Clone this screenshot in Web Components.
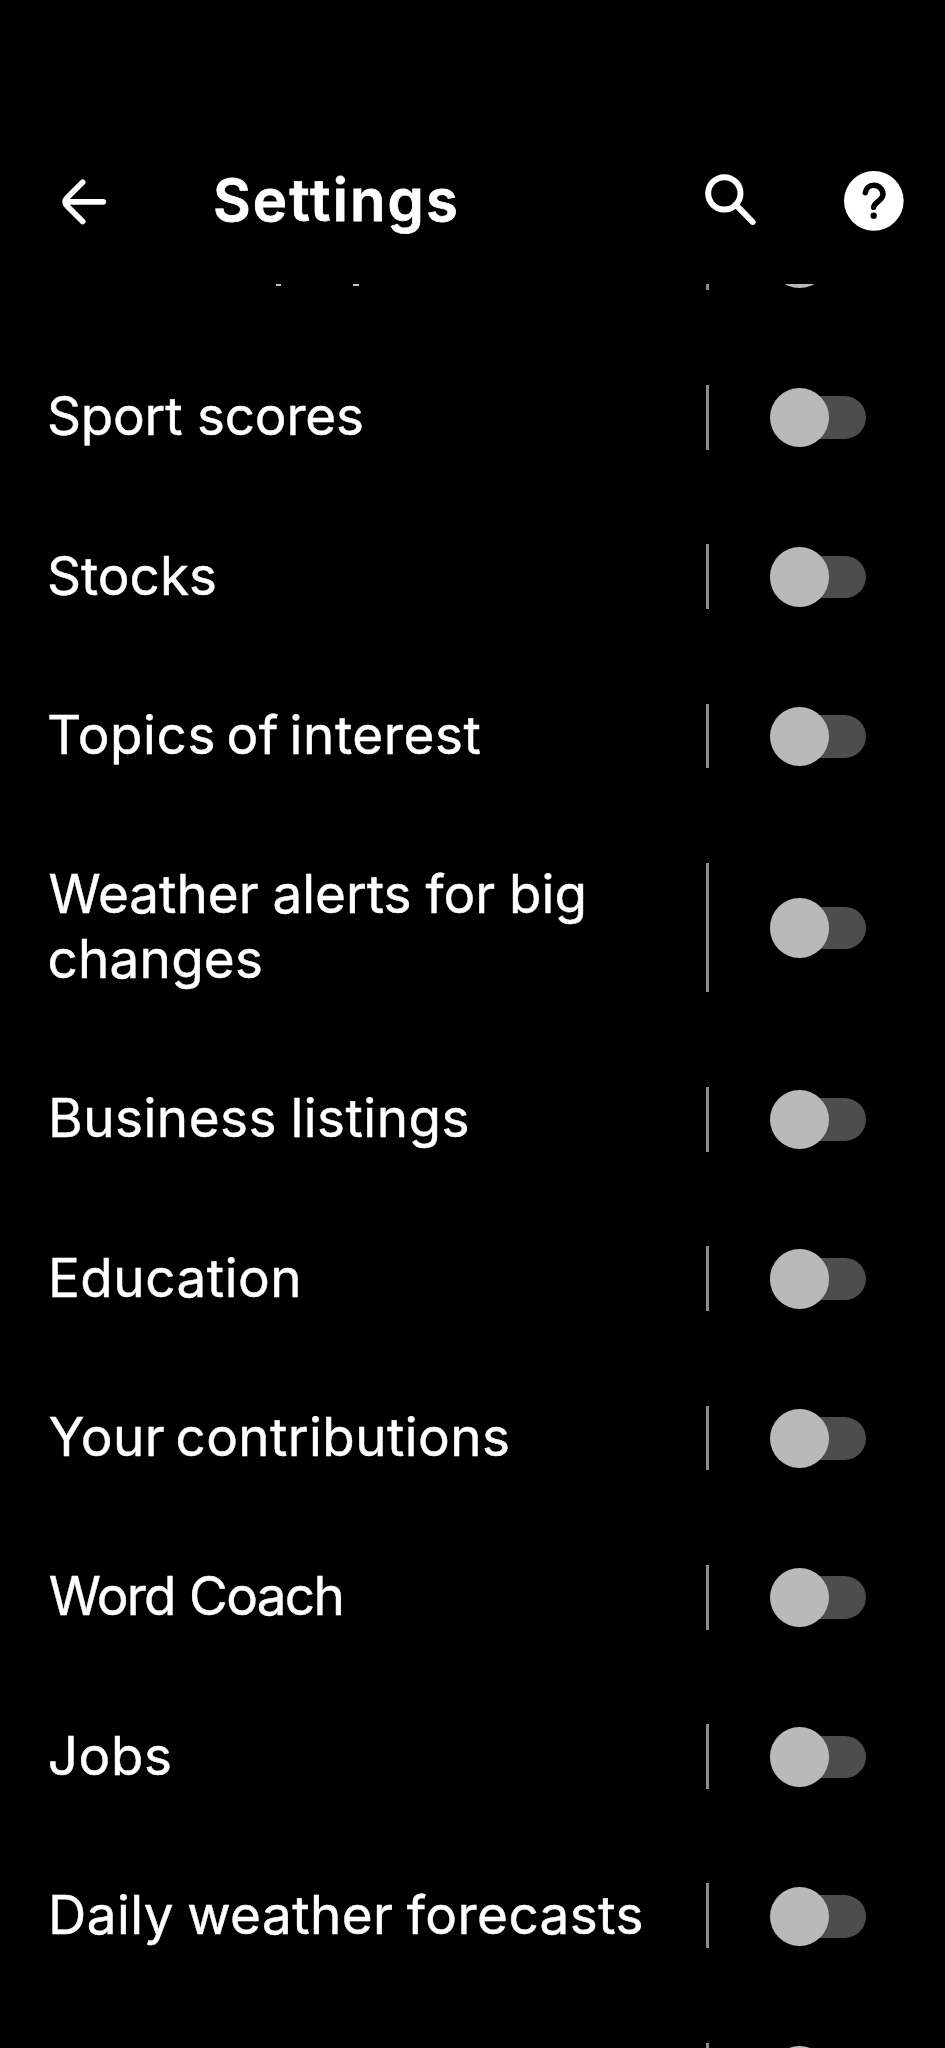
<!DOCTYPE html>
<html lang="en">
<head>
<meta charset="utf-8">
<title>Settings</title>
<style>
html, body { margin: 0; background: #000; color: #fff; font-family: Inter, Roboto, "Noto Sans", sans-serif; }
body { height: 2048px; overflow: hidden; }
</style>
</head>
<body>
<settings-screen>
  <app-bar slot="bar"><fit-text slot="title" size="58" weight="600" edge="0.8" left="215" right="456">Settings</fit-text></app-bar>
  <setting-row cut></setting-row>
  <setting-row><fit-text left="50" right="362">Sport scores</fit-text></setting-row>
  <setting-row><fit-text left="50" right="215">Stocks</fit-text></setting-row>
  <setting-row><fit-text word="-5" left="49" right="480.6">Topics of interest</fit-text></setting-row>
  <setting-row><fit-text word="-1" left="49.4" right="583.4">Weather alerts for big</fit-text><fit-text left="49.5" right="261">changes</fit-text></setting-row>
  <setting-row><fit-text word="-2" left="52" right="467.5">Business listings</fit-text></setting-row>
  <setting-row><fit-text left="52" right="298.3">Education</fit-text></setting-row>
  <setting-row><fit-text word="-5" left="49.4" right="508">Your contributions</fit-text></setting-row>
  <setting-row><fit-text word="1" left="49.8" right="341.4">Word Coach</fit-text></setting-row>
  <setting-row><fit-text left="49.8" right="170">Jobs</fit-text></setting-row>
  <setting-row><fit-text word="-2" left="52" right="641.5">Daily weather forecasts</fit-text></setting-row>
  <setting-row></setting-row>
</settings-screen>
<script>
const attach = (el, html) => { el.attachShadow({ mode: 'open' }).innerHTML = html; };

/* A single line of text tracked so that its ink spans left..right. */
customElements.define('fit-text', class extends HTMLElement {
  connectedCallback() {
    const size = this.getAttribute('size') || 53;
    const weight = this.getAttribute('weight') || 400;
    const edge = this.getAttribute('edge') || 0.45;
    const left = +this.getAttribute('left'), right = +this.getAttribute('right');
    const text = this.textContent;
    const wordGap = +(this.getAttribute('word') || 0), spaces = text.split(' ').length - 1;
    const ctx = document.createElement('canvas').getContext('2d');
    ctx.font = `${weight} ${size}px Inter`;
    const m = ctx.measureText(text);
    const ink = m.actualBoundingBoxRight + m.actualBoundingBoxLeft + wordGap * spaces;
    const gap = (right - left - ink) / (text.length - 1);
    attach(this, `<style>
      :host { display: block; white-space: nowrap; font-size: ${size}px; font-weight: ${weight};
        letter-spacing: ${gap.toFixed(3)}px; word-spacing: ${wordGap}px;
        padding-left: ${(left + m.actualBoundingBoxLeft).toFixed(2)}px;
        -webkit-text-stroke: ${edge}px #fff; }
    </style><slot></slot>`);
  }
});

customElements.define('toggle-switch', class extends HTMLElement {
  connectedCallback() {
    attach(this, `<style>
      :host { display: grid; width: 96px; height: 60px; align-items: center; }
      i { grid-area: 1 / 1; }
      .track { width: 92px; height: 42.6px; margin-left: 4px; border-radius: 22px; background: #4d4d4d; }
      .knob { width: 59.4px; height: 59.4px; border-radius: 50%; background: #b9b9b9; }
    </style><i class="track"></i><i class="knob"></i>`);
  }
});

customElements.define('setting-row', class extends HTMLElement {
  connectedCallback() {
    attach(this, `<style>
      :host { display: grid; grid-template-columns: 706.2px 2.6px auto; align-items: center;
        min-height: 64.8px; line-height: 64.8px; }
      .label { margin-top: -0.6px; margin-bottom: 0.6px; align-self: start; }
      .rule { align-self: stretch; background: #8c8c8c; }
      toggle-switch { margin: 0.8px 0 0 61.2px; }
      .tails { display: none; }
      :host([cut]) .tails { display: flex; gap: 72.5px; padding-left: 275.5px; align-self: start; margin-top: 58px; }
      .tails i { width: 5.4px; height: 2.7px; background: #c4c4c4; }
      :host([cut]) .label { display: none; }
    </style><div class="label"><slot></slot></div><div class="tails"><i></i><i></i></div>
    <div class="rule"></div><toggle-switch></toggle-switch>`);
  }
});

customElements.define('app-bar', class extends HTMLElement {
  connectedCallback() {
    attach(this, `<style>
      :host { display: grid; grid-template-columns: 1fr; height: 284.2px; background: #000; }
      .icons { grid-area: 1 / 1; display: flex; align-items: flex-start; padding-top: 171px; }
      svg { display: block; flex: none; fill: none; stroke: #fff; stroke-linecap: round; stroke-linejoin: round; }
      .back { width: 44.67px; height: 46px; margin: 7.5px 0 0 62.33px; stroke-width: 17; }
      .find { width: 51px; height: 51.33px; margin: 3px 0 0 598.33px; stroke-width: 18; }
      .help { width: 59.67px; height: 59.67px; margin-left: 88px; }
      .title { grid-area: 1 / 1; padding-top: 164.6px; line-height: 70px; }
    </style>
    <div class="icons">
      <svg class="back" viewBox="187 86.5 134 138"><path d="M249 96 203 142Q190 155 203 168L249 214M203 155H311"/></svg>
      <svg class="find" viewBox="136 72 153 154"><circle cx="194" cy="130" r="48.5"/><path d="M228 164 279 216"/></svg>
      <svg class="help" viewBox="553 63 179 179"><circle cx="642.5" cy="152.500" r="89.500" fill="#fff" stroke="none"/>
        <path d="M617 128C619 115 629 106 642 106C658 106 670 118 670 133C670 153 643 155 642 172" stroke="#000" stroke-width="16.500"/>
        <circle cx="642" cy="197" r="9.500" fill="#000" stroke="none"/></svg>
    </div>
    <div class="title"><slot name="title"></slot></div>`);
  }
});

customElements.define('settings-screen', class extends HTMLElement {
  connectedCallback() {
    attach(this, `<style>
      :host { display: flex; flex-direction: column; width: 945px; height: 2048px; overflow: hidden; background: #000; }
      .view { flex: 1; min-height: 0; overflow: hidden; }
      .list { display: flex; flex-direction: column; gap: 94.5px; margin-top: -58.5px; }
    </style><slot name="bar"></slot><div class="view"><div class="list"><slot></slot></div></div>`);
  }
});
</script>
</body>
</html>
